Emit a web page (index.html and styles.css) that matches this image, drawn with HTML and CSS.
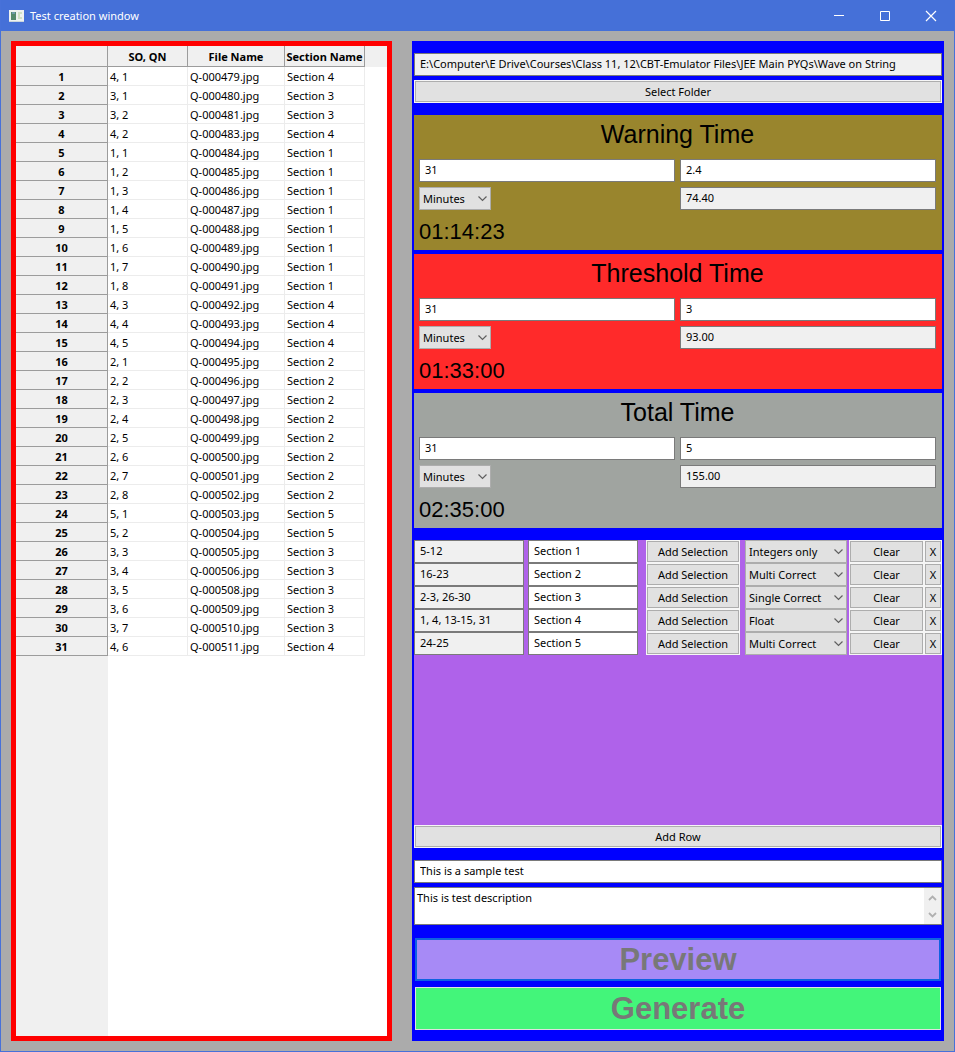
FILE: index.html
```html
<!DOCTYPE html>
<html lang="en">
<head>
<meta charset="utf-8">
<title>Test creation window</title>
<link rel="stylesheet" href="styles.css">
</head>
<body>
<div class="window">
  <header class="titlebar">
    <svg class="app-icon" width="15" height="12" viewBox="0 0 15 12" aria-hidden="true"><rect width="15" height="12" fill="#eef2f0"/><path d="M2 2h5v8H2z" fill="#54896c"/><path d="M3 2h3v2H3z" fill="#6d9ca9"/><path d="M9 2h4v2h-2v3h2v2H9z" fill="#cfe0c4"/><path d="M0 11h15v1H0z" fill="#cbd5dc"/></svg>
    <h1 class="window-title">Test creation window</h1>
    <div class="window-controls">
      <button class="window-button" aria-label="Minimize"><svg width="12" height="12" viewBox="0 0 12 12"><path d="M1 5.500h10" stroke="#fff" fill="none"/></svg></button>
      <button class="window-button" aria-label="Maximize"><svg width="12" height="12" viewBox="0 0 12 12"><path d="M1.500 1.500h9v9h-9z" stroke="#fff" fill="none"/></svg></button>
      <button class="window-button" aria-label="Close"><svg width="12" height="12" viewBox="0 0 12 12"><path d="M1 1l10 10M11 1L1 11" stroke="#fff" stroke-width="1.200" fill="none"/></svg></button>
    </div>
  </header>
  <main class="content">
    <section class="files" aria-label="Question files">
      <table class="sheet">
        <colgroup><col class="col-index"><col class="col-order"><col class="col-file"><col class="col-section"><col></colgroup>
        <thead><tr><th></th><th scope="col">SO, QN</th><th scope="col">File Name</th><th scope="col">Section Name</th><td class="filler"></td></tr></thead>
        <tbody id="rows"></tbody>
      </table>
    </section>
    <form class="setup">
      <div class="stack">
        <input class="field readonly" aria-label="Folder" readonly value="E:\Computer\E Drive\Courses\Class 11, 12\CBT-Emulator Files\JEE Main PYQs\Wave on String">
        <button type="button" class="button">Select Folder</button>
      </div>
      <div class="stack">
        <section class="timing warning">
          <h2 class="timing-title">Warning Time</h2>
          <div class="timing-grid">
            <input class="field" aria-label="Warning questions" value="31">
            <input class="field" aria-label="Warning time per question" value="2.4">
            <select class="select unit" aria-label="Warning unit"><option>Minutes</option></select>
            <input class="field readonly" aria-label="Warning result" readonly value="74.40">
          </div>
          <output class="clock">01:14:23</output>
        </section>
        <section class="timing threshold">
          <h2 class="timing-title">Threshold Time</h2>
          <div class="timing-grid">
            <input class="field" aria-label="Threshold questions" value="31">
            <input class="field" aria-label="Threshold time per question" value="3">
            <select class="select unit" aria-label="Threshold unit"><option>Minutes</option></select>
            <input class="field readonly" aria-label="Threshold result" readonly value="93.00">
          </div>
          <output class="clock">01:33:00</output>
        </section>
        <section class="timing total">
          <h2 class="timing-title">Total Time</h2>
          <div class="timing-grid">
            <input class="field" aria-label="Total questions" value="31">
            <input class="field" aria-label="Total time per question" value="5">
            <select class="select unit" aria-label="Total unit"><option>Minutes</option></select>
            <input class="field readonly" aria-label="Total result" readonly value="155.00">
          </div>
          <output class="clock">02:35:00</output>
        </section>
      </div>
      <div class="sections">
        <div class="section-list" id="sections"></div>
        <button type="button" class="button">Add Row</button>
      </div>
      <div class="stack">
        <input class="field" aria-label="Test name" value="This is a sample test">
        <div class="description">
          <textarea class="description-text" aria-label="Test description">This is test description</textarea>
          <span class="scrollbar" aria-hidden="true">
            <svg width="9" height="6" viewBox="0 0 9 6"><path d="M1 5l3.500-3.500L8 5" fill="none" stroke="#b0b0b0" stroke-width="1.800"/></svg>
            <svg width="9" height="6" viewBox="0 0 9 6"><path d="M1 1l3.500 3.500L8 1" fill="none" stroke="#b0b0b0" stroke-width="1.800"/></svg>
          </span>
        </div>
      </div>
      <div class="actions">
        <button type="button" class="action preview">Preview</button>
        <button type="button" class="action generate">Generate</button>
      </div>
    </form>
  </main>
</div>
<script src="app.js"></script>
</body>
</html>
```
FILE: styles.css
```css
* { box-sizing: border-box; }

body {
  margin: 0;
  font-family: "Noto Sans", "Open Sans", sans-serif;
  font-size: 11px;
  line-height: 16px;
  color: #000;
}

button, input, select, textarea {
  margin: 0;
  font: inherit;
  color: inherit;
  border-radius: 0;
}

.window {
  display: flex;
  flex-direction: column;
  min-height: 100vh;
  border: 1px solid #4771d9;
  border-top: 0;
  background: #ababab;
}

.titlebar {
  display: flex;
  align-items: center;
  height: 31px;
  padding-left: 8px;
  background: #4570d8;
  color: #fff;
}

.window-title {
  margin: 0 auto 0 6px;
  font-size: 11px;
  font-weight: 400;
}

.window-controls { display: flex; }

.window-button {
  display: grid;
  place-items: center;
  width: 46px;
  height: 31px;
  padding: 0;
  border: 0;
  background: none;
}

.content {
  flex: 1;
  display: grid;
  grid-template-columns: minmax(0, 381fr) minmax(0, 532fr);
  gap: 20px;
  padding: 10px;
}

.files {
  border: 5px solid #ff0000;
  background: linear-gradient(to right, #f0f0f0 92px, #fff 92px);
}

.sheet {
  width: 100%;
  table-layout: fixed;
  border-collapse: separate;
  border-spacing: 0;
}

.col-index { width: 92px; }
.col-order { width: 80px; }
.col-file { width: 97px; }
.col-section { width: 80px; }

.sheet th,
.sheet td {
  height: 19px;
  padding: 2px 2px 0;
  line-height: 16px;
  white-space: nowrap;
  border: solid #ececec;
  border-width: 0 1px 1px 0;
}

.sheet th {
  padding: 2px 0 0;
  background: #f0f0f0;
  border-color: #9c9c9c;
  font-weight: 700;
  text-align: center;
}

.sheet thead th { height: 21px; }

.sheet .filler {
  border: 0;
  background: #f0f0f0;
}

.setup {
  display: flex;
  flex-direction: column;
  gap: 12px;
  padding: 12px 2px 11px;
  background: #0000ff;
}

.stack {
  display: flex;
  flex-direction: column;
  gap: 4px;
}

.field {
  width: 100%;
  min-width: 0;
  height: 23px;
  padding: 0 5px 2px;
  border: 1px solid #7a7a7a;
  background: #fff;
}

.readonly { background: #f0f0f0; }

.button {
  height: 23px;
  padding: 0;
  border: 1px solid #f6f6f6;
  background: #e1e1e1;
  box-shadow: inset 0 0 0 1px #adadad;
  text-align: center;
}

.select {
  height: 23px;
  padding: 0 20px 0 3px;
  border: 1px solid #adadad;
  appearance: none;
  background: #e1e1e1 url("data:image/svg+xml,%3Csvg xmlns='http://www.w3.org/2000/svg' width='9' height='6'%3E%3Cpath d='M.5 .5l4 4 4-4' fill='none' stroke='%23606060' stroke-width='1.2'/%3E%3C/svg%3E") no-repeat right 3px center;
}

.timing {
  padding: 0 6px 0 5px;
}

.warning { background: #99852d; }
.threshold { background: #ff2a2a; }
.total { background: #a0a4a0; }

.timing-title {
  margin: 0;
  padding-bottom: 6px;
  font: 400 25px/38px "Liberation Sans", Arial, sans-serif;
  text-align: center;
}

.timing-grid {
  display: grid;
  grid-template-columns: 1fr 1fr;
  gap: 5px;
}

.unit { width: 72px; }

.clock {
  display: block;
  padding-top: 4px;
  font: 22px/36px "Liberation Sans", Arial, sans-serif;
}

.sections {
  flex: 1;
  display: flex;
  flex-direction: column;
  justify-content: space-between;
  background: #af62ea;
}

.section-row {
  display: grid;
  grid-template-columns: minmax(0, 114fr) minmax(0, 118fr) 99px 104px 75px 18px;
}

.row-range { width: auto; margin-right: 4px; }
.row-name { width: auto; margin-right: 8px; }
.row-add { margin-right: 5px; }
.row-type { margin-right: 2px; }

.description {
  display: flex;
  height: 38px;
  border: 1px solid #7a7a7a;
  background: #fff;
}

.description-text {
  flex: 1;
  min-width: 0;
  padding: 2px;
  border: 0;
  background: #fff;
  resize: none;
  overflow: hidden;
}

.scrollbar {
  display: flex;
  flex-direction: column;
  align-items: center;
  justify-content: space-between;
  width: 17px;
  padding: 7px 0 6px;
  background: #f0f0f0;
}

.actions {
  display: flex;
  flex-direction: column;
  gap: 6px;
  padding: 1px 1px 0;
}

.action {
  height: 43px;
  padding: 0;
  color: #787878;
  font: 700 31px/36px "Liberation Sans", Arial, sans-serif;
}

.preview {
  border: 2px solid #0f62e0;
  background: #a78af6;
}

.generate {
  border: 1px solid #e1e1e1;
  background: #43f57a;
}
```
FILE: app.js
```js
const files = [
  ["4, 1", "479", 4], ["3, 1", "480", 3], ["3, 2", "481", 3], ["4, 2", "483", 4],
  ["1, 1", "484", 1], ["1, 2", "485", 1], ["1, 3", "486", 1], ["1, 4", "487", 1],
  ["1, 5", "488", 1], ["1, 6", "489", 1], ["1, 7", "490", 1], ["1, 8", "491", 1],
  ["4, 3", "492", 4], ["4, 4", "493", 4], ["4, 5", "494", 4], ["2, 1", "495", 2],
  ["2, 2", "496", 2], ["2, 3", "497", 2], ["2, 4", "498", 2], ["2, 5", "499", 2],
  ["2, 6", "500", 2], ["2, 7", "501", 2], ["2, 8", "502", 2], ["5, 1", "503", 5],
  ["5, 2", "504", 5], ["3, 3", "505", 3], ["3, 4", "506", 3], ["3, 5", "508", 3],
  ["3, 6", "509", 3], ["3, 7", "510", 3], ["4, 6", "511", 4]
];

document.getElementById("rows").innerHTML = files.map(([order, number, section], i) =>
  `<tr><th scope="row">${i + 1}</th><td>${order}</td><td>Q-000${number}.jpg</td><td>Section ${section}</td></tr>`
).join("");

const types = ["Integers only", "Multi Correct", "Single Correct", "Float"];
const sections = [
  ["5-12", "Integers only"], ["16-23", "Multi Correct"], ["2-3, 26-30", "Single Correct"],
  ["1, 4, 13-15, 31", "Float"], ["24-25", "Multi Correct"]
];

document.getElementById("sections").innerHTML = sections.map(([range, type], i) => `
  <div class="section-row">
    <input class="field readonly row-range" aria-label="Rows ${i + 1}" readonly value="${range}">
    <input class="field row-name" aria-label="Section name ${i + 1}" value="Section ${i + 1}">
    <button type="button" class="button row-add">Add Selection</button>
    <select class="select row-type" aria-label="Question type ${i + 1}">${types.map(t =>
      `<option${t === type ? " selected" : ""}>${t}</option>`).join("")}</select>
    <button type="button" class="button">Clear</button>
    <button type="button" class="button" aria-label="Remove row ${i + 1}">X</button>
  </div>`).join("");
```
